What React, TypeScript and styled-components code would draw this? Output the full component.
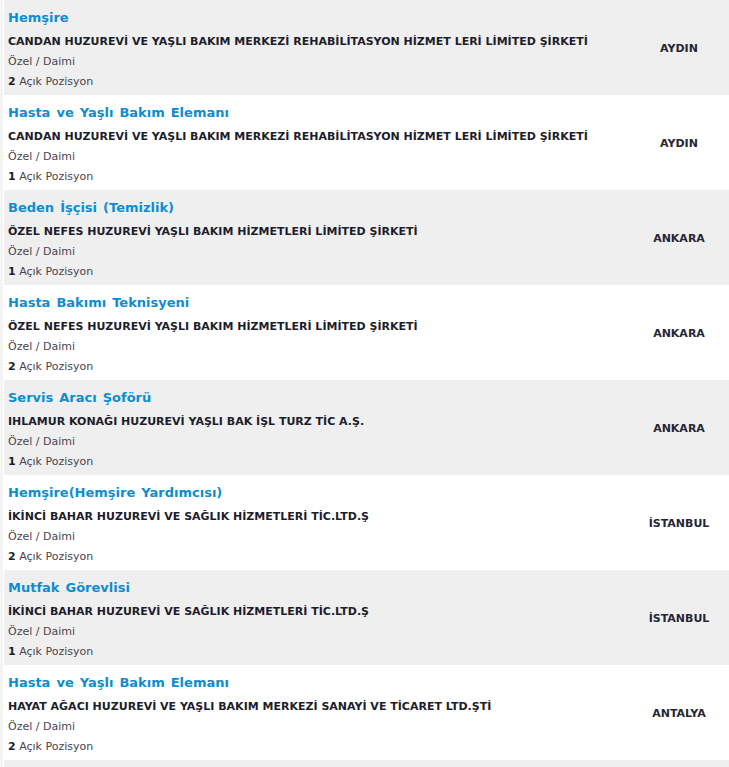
import React from "react";
import styled, { createGlobalStyle } from "styled-components";

const GlobalStyle = createGlobalStyle`
  html, body {
    margin: 0;
    padding: 0;
    background: #ffffff;
  }
  body {
    font-family: "DejaVu Sans", Verdana, sans-serif;
  }
`;

const Page = styled.div`
  padding-left: 4px;
  background: linear-gradient(to right, #f4f4f4 0, #f4f4f4 3px, #ffffff 3px);
  overflow: hidden;
`;

const List = styled.div`
  display: flex;
  flex-direction: column;
`;

const Row = styled.div<{ $alt: boolean }>`
  display: flex;
  align-items: stretch;
  height: 95px;
  background: ${(p) => (p.$alt ? "#efefef" : "#ffffff")};
`;

const MoreRow = styled.div`
  height: 40px;
  background: #efefef;
`;

const Info = styled.div`
  flex: 1;
  display: flex;
  flex-direction: column;
  padding: 8px 0 0 4px;
`;

const Title = styled.a`
  font-size: 13px;
  font-weight: bold;
  color: #0d8dd0;
  line-height: 20px;
  height: 24px;
  word-spacing: 1.5px;
  text-decoration: none;
`;

const Company = styled.div`
  font-size: 11px;
  font-weight: bold;
  color: #1d1d2b;
  line-height: 20px;
`;

const Meta = styled.div`
  font-size: 11px;
  color: #4a4450;
  line-height: 20px;
`;

const Count = styled.b`
  color: #1d1d2b;
`;

const City = styled.div`
  width: 100px;
  display: flex;
  align-items: center;
  justify-content: center;
  padding-top: 2px;
  font-size: 11px;
  font-weight: bold;
  color: #262636;
`;

type Job = { title: string; company: string; count: number; city: string };

const jobs: Job[] = [
  {
    title: "Hemşire",
    company:
      "CANDAN HUZUREVİ VE YAŞLI BAKIM MERKEZİ REHABİLİTASYON HİZMET LERİ LİMİTED ŞİRKETİ",
    count: 2,
    city: "AYDIN",
  },
  {
    title: "Hasta ve Yaşlı Bakım Elemanı",
    company:
      "CANDAN HUZUREVİ VE YAŞLI BAKIM MERKEZİ REHABİLİTASYON HİZMET LERİ LİMİTED ŞİRKETİ",
    count: 1,
    city: "AYDIN",
  },
  {
    title: "Beden İşçisi (Temizlik)",
    company: "ÖZEL NEFES HUZUREVİ YAŞLI BAKIM HİZMETLERİ LİMİTED ŞİRKETİ",
    count: 1,
    city: "ANKARA",
  },
  {
    title: "Hasta Bakımı Teknisyeni",
    company: "ÖZEL NEFES HUZUREVİ YAŞLI BAKIM HİZMETLERİ LİMİTED ŞİRKETİ",
    count: 2,
    city: "ANKARA",
  },
  {
    title: "Servis Aracı Şoförü",
    company: "IHLAMUR KONAĞI HUZUREVİ YAŞLI BAK İŞL TURZ TİC A.Ş.",
    count: 1,
    city: "ANKARA",
  },
  {
    title: "Hemşire(Hemşire Yardımcısı)",
    company: "İKİNCİ BAHAR HUZUREVİ VE SAĞLIK HİZMETLERİ TİC.LTD.Ş",
    count: 2,
    city: "İSTANBUL",
  },
  {
    title: "Mutfak Görevlisi",
    company: "İKİNCİ BAHAR HUZUREVİ VE SAĞLIK HİZMETLERİ TİC.LTD.Ş",
    count: 1,
    city: "İSTANBUL",
  },
  {
    title: "Hasta ve Yaşlı Bakım Elemanı",
    company:
      "HAYAT AĞACI HUZUREVİ VE YAŞLI BAKIM MERKEZİ SANAYİ VE TİCARET LTD.ŞTİ",
    count: 2,
    city: "ANTALYA",
  },
];

export default function App() {
  return (
    <>
      <GlobalStyle />
      <Page>
        <List>
          {jobs.map((j, i) => (
            <Row key={i} $alt={i % 2 === 0}>
              <Info>
                <Title href="#">{j.title}</Title>
                <Company>{j.company}</Company>
                <Meta>Özel / Daimi</Meta>
                <Meta>
                  <Count>{j.count}</Count> Açık Pozisyon
                </Meta>
              </Info>
              <City>{j.city}</City>
            </Row>
          ))}
          <MoreRow />
        </List>
      </Page>
    </>
  );
}
